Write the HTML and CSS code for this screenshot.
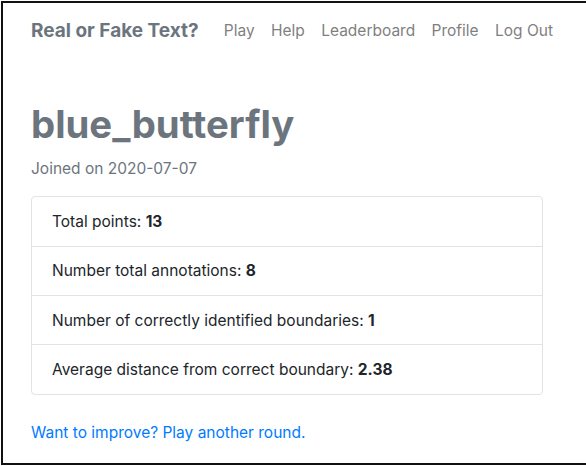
FILE: index.html
```html
<!DOCTYPE html>
<html>
<head>
<meta charset="utf-8">
<link rel="stylesheet" href="styles.css">
</head>
<body>
<div class="frame">
  <nav class="navbar">
    <span class="brand">Real or Fake Text?</span>
    <a class="nav-link">Play</a>
    <a class="nav-link">Help</a>
    <a class="nav-link">Leaderboard</a>
    <a class="nav-link">Profile</a>
    <a class="nav-link">Log Out</a>
  </nav>
  <main class="content">
    <h1 class="username">blue_butterfly</h1>
    <p class="joined">Joined on 2020-07-07</p>
    <ul class="list-group">
      <li class="list-item">Total points: <b>13</b></li>
      <li class="list-item">Number total annotations: <b>8</b></li>
      <li class="list-item">Number of correctly identified boundaries: <b>1</b></li>
      <li class="list-item">Average distance from correct boundary: <b>2.38</b></li>
    </ul>
    <a class="play-link">Want to improve? Play another round.</a>
  </main>
</div>
</body>
</html>
```
FILE: styles.css
```css
* { box-sizing: border-box; }
html, body { margin: 0; padding: 0; background: #fff; }
body {
  font-family: Inter, "Noto Sans", sans-serif;
  font-size: 15.5px;
  line-height: 24px;
  color: #212529;
}
.frame {
  margin: 1px 0 0 1px;
  height: 464px;
  border: 2px solid #111;
  border-right: none;
}
.navbar {
  display: flex;
  align-items: center;
  height: 56px;
  padding: 0 0 0 28px;
}
.brand {
  font-size: 19px;
  font-weight: 700;
  color: #6c757d;
  margin-right: 17px;
}
.nav-link {
  padding: 0 8.2px;
  color: #7f7f7f;
  font-size: 15.5px;
}
.content {
  padding: 0 0 0 28px;
}
.username {
  margin: 41px 0 0;
  font-size: 38.3px;
  line-height: 48px;
  font-weight: 700;
  color: #6c757d;
}
.joined {
  margin: 9px 0 0;
  color: #6c757d;
}
.list-group {
  list-style: none;
  margin: 15px 0 0;
  padding: 0;
  width: 512px;
  border: 1px solid #e3e3e3;
  border-radius: 4px;
}
.list-item {
  padding: 12.5px 20px;
  border-top: 1px solid #e3e3e3;
  height: 49.3px;
}
.list-item:first-child { border-top: none; height: 48.8px; }
.list-item b { font-weight: 700; }
.play-link {
  display: block;
  margin-top: 26px;
  color: #007bff;
}
```
